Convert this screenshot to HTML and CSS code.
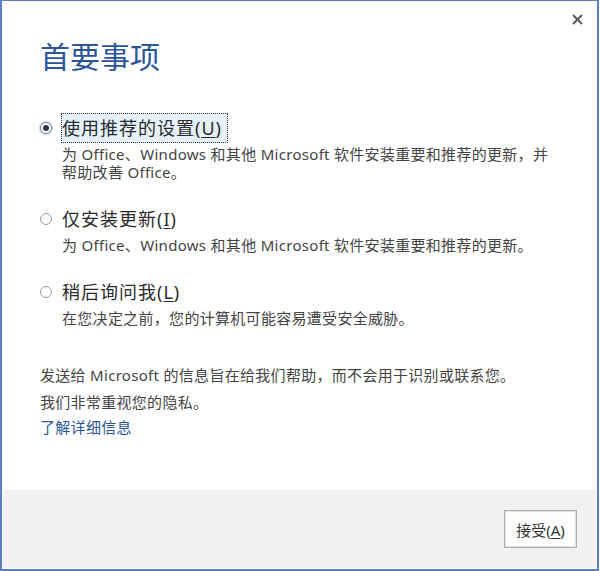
FILE: index.html
```html
<!DOCTYPE html>
<html lang="zh-CN">
  <head>
    <meta charset="UTF-8" />
    <meta name="viewport" content="width=device-width, initial-scale=1.0" />
    <title>首要事项</title>
    <link rel="stylesheet" href="styles.css">
  </head>
  <body>
    <div class="window">
      <button class="close-btn" title="关闭">
        <svg width="11" height="11" viewBox="0 0 11 11">
          <path d="M1 1 L10 10 M10 1 L1 10" stroke="#595959" stroke-width="2" fill="none" />
        </svg>
      </button>
      <main class="content">
        <h1 class="title">首要事项</h1>

        <div class="option">
          <div class="option-row">
            <span class="radio checked"></span>
            <span class="label focused">使用推荐的设置(<u>U</u>)</span>
          </div>
          <p class="desc">为 Office、Windows 和其他 Microsoft 软件安装重要和推荐的更新，并<br />帮助改善 Office。</p>
        </div>

        <div class="option">
          <div class="option-row">
            <span class="radio"></span>
            <span class="label">仅安装更新(<u>I</u>)</span>
          </div>
          <p class="desc">为 Office、Windows 和其他 Microsoft 软件安装重要和推荐的更新。</p>
        </div>

        <div class="option">
          <div class="option-row">
            <span class="radio"></span>
            <span class="label">稍后询问我(<u>L</u>)</span>
          </div>
          <p class="desc">在您决定之前，您的计算机可能容易遭受安全威胁。</p>
        </div>

        <p class="privacy">发送给 Microsoft 的信息旨在给我们帮助，而不会用于识别或联系您。<br />我们非常重视您的隐私。</p>
        <a class="more-link" href="#">了解详细信息</a>
      </main>
      <footer class="footer">
        <button class="accept-btn">接受(<u>A</u>)</button>
      </footer>
    </div>
  </body>
</html>
```

FILE: styles.css
```css
body {
  margin: 0;
  font-family: "Noto Sans", "Noto Sans CJK SC", sans-serif;
  background-color: #fff;
}

.window {
  position: relative;
  width: 599px;
  height: 571px;
  box-sizing: border-box;
  border: 2px solid #5a80c2;
  border-top-width: 1px;
  padding: 1px;
  display: flex;
  flex-direction: column;
  background-color: #fff;
}

.close-btn {
  position: absolute;
  top: 10px;
  right: 12px;
  width: 15px;
  height: 15px;
  padding: 2px;
  border: none;
  background: none;
  cursor: pointer;
}

.content {
  flex: 1;
  padding: 35px 20px 0 35px;
}

.title {
  margin: 0 0 36px 2px;
  font-size: 30px;
  font-weight: normal;
  line-height: 40px;
  color: #2b579a;
}

.option {
  margin-bottom: 23px;
  margin-left: 2px;
}

.option-row {
  display: flex;
  align-items: center;
}

.radio {
  width: 10px;
  height: 10px;
  margin: 0 9px 0 0;
  border: 1px solid #999;
  border-radius: 50%;
  background-color: #fff;
  display: flex;
  justify-content: center;
  align-items: center;
}

.radio.checked {
  border-color: #6f86a8;
  box-shadow: 0 0 0 1px #c9dcf2;
}

.radio.checked::after {
  content: "";
  width: 6px;
  height: 6px;
  border-radius: 50%;
  background-color: #333;
}

.label {
  padding: 0 5px 0 0;
  border: 1px dotted transparent;
  font-size: 18px;
  letter-spacing: 1px;
  line-height: 28px;
  color: #2b2b2b;
}

.label u,
.accept-btn u {
  text-underline-offset: 2px;
}

.label.focused {
  border-color: #333;
  background-color: #e5f1fb;
}

.desc {
  margin: 2px 0 0 22px;
  font-size: 15px;
  letter-spacing: 0.3px;
  line-height: 18px;
  color: #444;
}

.privacy {
  margin: 35px 0 0 2px;
  font-size: 15px;
  letter-spacing: 0.3px;
  line-height: 27px;
  color: #444;
}

.more-link {
  display: block;
  margin-left: 2px;
  font-size: 15px;
  letter-spacing: 0.3px;
  line-height: 22px;
  color: #2b579a;
  text-decoration: none;
}

.footer {
  height: 78px;
  box-sizing: border-box;
  padding: 20px 19px 0 0;
  background-color: #f1f1f1;
  display: flex;
  justify-content: flex-end;
  align-items: flex-start;
}

.accept-btn {
  width: 73px;
  height: 38px;
  border: 1px solid #adadad;
  box-shadow: inset 0 0 0 1px #e3e3e3;
  background-color: #fdfdfd;
  font-family: "Noto Sans", "Noto Sans CJK SC", sans-serif;
  font-size: 15px;
  color: #333;
  cursor: pointer;
}
```
